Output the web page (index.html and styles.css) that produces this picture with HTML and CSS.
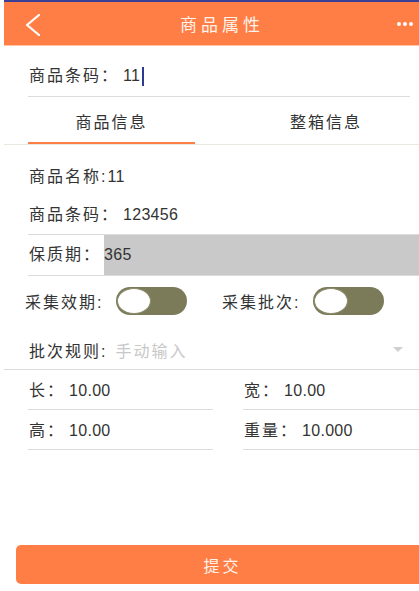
FILE: index.html
```html
<!DOCTYPE html>
<html lang="zh">
<head>
<meta charset="utf-8">
<title>商品属性</title>
<link rel="stylesheet" href="styles.css">
</head>
<body>
<div class="page">
  <div class="statusbar"></div>
  <header class="nav">
    <svg class="back" width="16" height="22" viewBox="0 0 16 22"><polyline points="14,1 2,11 14,21" fill="none" stroke="#fff" stroke-width="2.2" stroke-linecap="round" stroke-linejoin="round"/></svg>
    <div class="title">商品属性</div>
    <div class="dots"><i></i><i></i><i></i></div>
  </header>

  <div class="barcode-field">
    <span class="label">商品条码：</span><span class="num">11</span><span class="caret"></span>
  </div>

  <div class="tabs">
    <div class="tab active">商品信息</div>
    <div class="tab">整箱信息</div>
  </div>

  <div class="info">
    <div class="row">商品名称:<span class="num">11</span></div>
    <div class="row"><span class="label">商品条码：</span><span class="num">123456</span></div>
    <div class="row shelf"><span class="label">保质期：</span><span class="val num">365</span></div>
  </div>

  <div class="toggles">
    <div class="toggle-item"><span class="tlabel">采集效期:</span><span class="switch"><span class="knob"></span></span></div>
    <div class="toggle-item second"><span class="tlabel">采集批次:</span><span class="switch"><span class="knob"></span></span></div>
  </div>

  <div class="select-row">
    <span class="label">批次规则:</span><span class="placeholder">手动输入</span>
    <span class="arrow"></span>
  </div>

  <div class="dims">
    <div class="dim"><span class="label">长：</span><span class="num">10.00</span></div>
    <div class="dim"><span class="label">宽：</span><span class="num">10.00</span></div>
    <div class="dim"><span class="label">高：</span><span class="num">10.00</span></div>
    <div class="dim"><span class="label">重量：</span><span class="num">10.000</span></div>
  </div>

  <button class="submit">提交</button>
</div>
</body>
</html>
```

FILE: styles.css
```css
html, body {
  margin: 0;
  padding: 0;
  background: #fff;
}
body {
  font-family: "Liberation Sans", "Noto Sans CJK SC", sans-serif;
  color: #333;
  font-size: 16px;
  overflow: hidden;
}
.page {
  margin-left: 4px;
  width: 415px;
  height: 591px;
  overflow: hidden;
}
.statusbar {
  height: 2px;
  background: #3b3f96;
}
.nav {
  height: 43px;
  background: #ff7e45;
  border-bottom: 1px solid #ffc3a3;
  display: flex;
  align-items: center;
}
.back {
  margin-left: 21px;
  margin-top: 2px;
  flex: none;
}
.title {
  flex: 1;
  text-align: center;
  color: #fff3ec;
  font-size: 17px;
  letter-spacing: 4px;
  padding-left: 6px;
}
.dots {
  display: flex;
  gap: 2px;
  margin-right: 6px;
  margin-top: 1px;
}
.dots i {
  width: 4px;
  height: 4px;
  border-radius: 50%;
  background: #fff;
  display: block;
}
.num {
  font-size: 16px;
  letter-spacing: 0.3px;
}
.label {
  letter-spacing: 2px;
  margin-right: 4px;
}
.barcode-field {
  margin-left: 24px;
  margin-right: 9px;
  padding-top: 10px;
  line-height: 40px;
  height: 40px;
  border-bottom: 1px solid #dcdcdc;
  display: flex;
  align-items: center;
  padding-left: 1px;
}
.caret {
  width: 2px;
  height: 19px;
  background: #2c3a8f;
  margin-left: 2px;
}
.tabs {
  display: flex;
  padding-left: 24px;
  border-bottom: 1px solid #e9e9e2;
  white-space: nowrap;
}
.tab {
  flex: none;
  text-align: center;
  padding-top: 6px;
  line-height: 39px;
  border-bottom: 2px solid transparent;
  letter-spacing: 2px;
  font-size: 16px;
}
.tab.active {
  width: 167px;
  border-bottom-color: #ff7e45;
}
.tab:not(.active) {
  width: 262px;
}
.info {
  padding-top: 13px;
  padding-left: 24px;
}
.row {
  line-height: 38px;
  height: 38px;
  letter-spacing: 2px;
  padding-left: 1px;
}
.row.shelf {
  display: flex;
  height: 40px;
  line-height: 40px;
  border-top: 1px solid #dcdcdc;
  border-bottom: 1px solid #dcdcdc;
  padding-left: 0;
  width: 400px;
}
.shelf .label {
  width: 75px;
  margin-right: 0;
  padding-left: 1px;
  background: #fff;
}
.shelf .val {
  flex: 1;
  background: #c9c9c9;
}
.toggles {
  display: flex;
  align-items: center;
  height: 50px;
  padding-left: 21px;
}
.toggle-item {
  display: flex;
  align-items: center;
}
.toggle-item.second {
  margin-left: 35px;
}
.tlabel {
  letter-spacing: 2px;
  width: 91px;
}
.switch {
  width: 71px;
  height: 28px;
  border-radius: 14px;
  background: #7b7b5a;
  display: flex;
  align-items: center;
  padding-left: 1px;
  box-sizing: border-box;
}
.knob {
  width: 32px;
  height: 24px;
  border-radius: 50%;
  background: #fff;
  border: 1px solid #8b8b6b;
}
.select-row {
  display: flex;
  align-items: center;
  padding-top: 4px;
  height: 39px;
  padding-left: 25px;
  border-bottom: 1px solid #dcdcdc;
}
.select-row .label {
  margin-right: 8px;
}
.placeholder {
  color: #c8c8c8;
  letter-spacing: 2px;
  flex: 1;
}
.arrow {
  width: 0;
  height: 0;
  border-left: 5px solid transparent;
  border-right: 5px solid transparent;
  border-top: 5px solid #cfcfcf;
  margin-right: 16px;
}
.dims {
  display: grid;
  grid-template-columns: 185px 176px;
  column-gap: 30px;
  padding-left: 24px;
}
.dim {
  padding-top: 2px;
  line-height: 37px;
  height: 37px;
  border-bottom: 1px solid #dcdcdc;
  padding-left: 1px;
}
.dim .label {
  margin-right: 4px;
}
.submit {
  display: block;
  margin-top: 95px;
  margin-left: 12px;
  width: 410px;
  height: 39px;
  border: none;
  border-radius: 5px;
  background: #ff7e45;
  color: #fff3ec;
  font-family: "Liberation Sans", "Noto Sans CJK SC", sans-serif;
  font-size: 16px;
  letter-spacing: 3px;
  padding: 0 0 0 3px;
  text-align: center;
}
```
